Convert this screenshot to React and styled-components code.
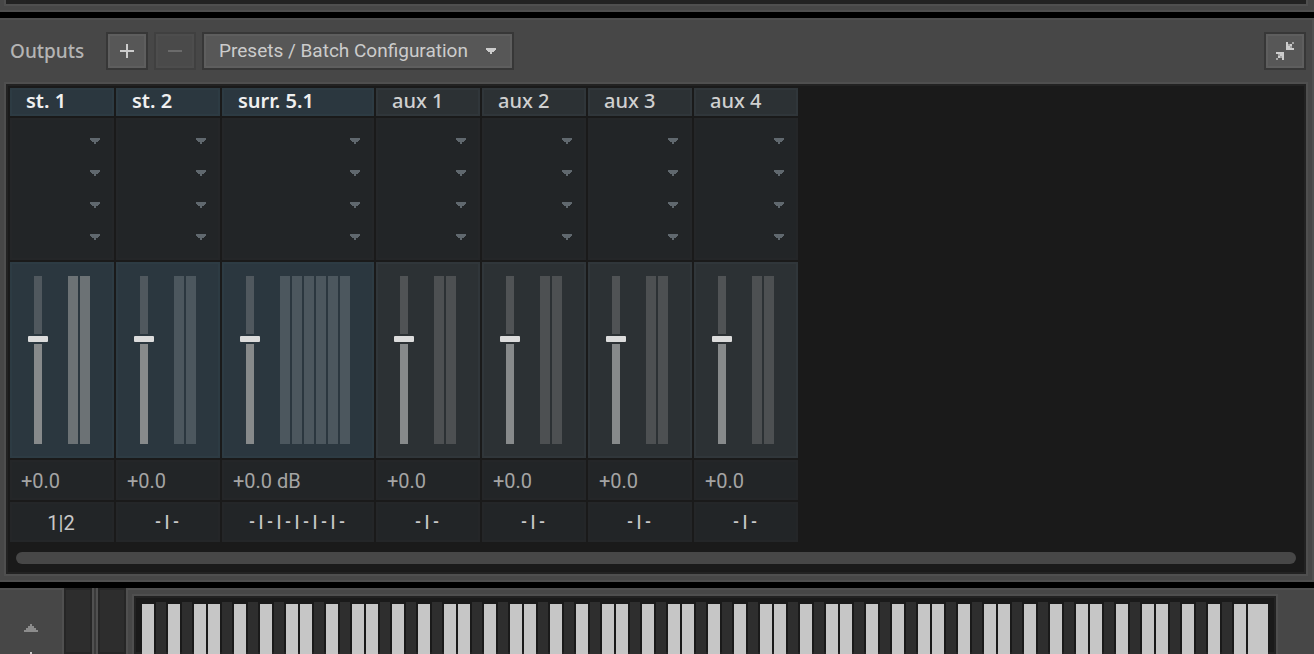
import React, { useState } from "react";
import styled, { createGlobalStyle, css } from "styled-components";

const GlobalStyle = createGlobalStyle`
  * { box-sizing: border-box; }
  html, body { margin: 0; background: #000; }
  button, input, select { font: inherit; color: inherit; margin: 0; border-radius: 0; }
`;

const labelFont = `"Noto Sans", "Open Sans", sans-serif`;
const pixelFont = `Roboto, "Liberation Sans", sans-serif`;
const dashFont = `"Liberation Mono", monospace`;

const Page = styled.div`
  height: 100vh;
  display: flex;
  flex-direction: column;
  gap: 6px;
  overflow: hidden;
  background: #000;
  color: #c8c8c8;
  font-family: ${pixelFont};
  font-size: 19px;
  line-height: 24px;
`;

const well = css`
  border: 2px solid #4f4f4f;
  background: #1a1a1a;
  box-shadow: inset 0 0 0 2px #222;
`;

const RackEdge = styled.header`
  flex: none;
  padding: 0 6px 4px 4px;
  background: #474747;
  border-bottom: 2px solid #505050;
`;

const RackWell = styled.div`
  ${well}
  border-top: 0;
  height: 6px;
`;

const OutputsPanel = styled.section`
  flex: none;
  padding: 12px 4px 4px;
  background: #474747;
  border: solid #505050;
  border-width: 2px 2px 2px 0;
`;

const Toolbar = styled.div`
  display: flex;
  align-items: center;
  gap: 6px;
  padding: 0 2px 12px 6px;
`;

const ToolbarTitle = styled.h1`
  margin: 0 15px 0 0;
  width: 75px;
  font: 500 19px/24px ${labelFont};
  color: #b4b4b4;
`;

const ToolButton = styled.button`
  display: flex;
  align-items: center;
  justify-content: center;
  gap: 18px;
  height: 38px;
  min-width: 42px;
  padding: ${(p) => (p.$wide ? "0 16px 0 15px" : "0")};
  border: 2px solid #373737;
  background: #575757;
  box-shadow: inset 0 0 0 2px #5e5e5e;
  color: #cccccc;
  &:disabled {
    border-color: #404040;
    background: #4a4a4a;
    box-shadow: inset 0 0 0 2px #4d4d4d;
    color: #6b6b6b;
  }
`;

const Spacer = styled.div`
  flex: 1;
`;

const Mixer = styled.div`
  ${well}
  padding: 4px 8px 10px 4px;
`;

const Channels = styled.div`
  display: flex;
  gap: 2px;
`;

const Channel = styled.article`
  flex: none;
  width: ${(p) => (p.$wide ? 152 : 104)}px;
  display: flex;
  flex-direction: column;
  gap: 2px;
`;

const ChannelName = styled.h2`
  margin: 0;
  height: 28px;
  padding: 0 16px;
  font: ${(p) => (p.$main ? 600 : 500)} 20px/26px ${labelFont};
  color: ${(p) => (p.$main ? "#f0f0f0" : "#d0d0d0")};
  background: ${(p) => (p.$main ? "#2b373f" : "#2c3134")};
  box-shadow: inset 0 0 0 2px ${(p) => (p.$main ? "#2d3b43" : "#30363a")};
`;

const darkCell = css`
  background: #222527;
  box-shadow: inset 0 0 0 2px #242628;
`;

const Slots = styled.div`
  ${darkCell}
  padding: 7px 0;
`;

const Slot = styled.label`
  display: grid;
  align-items: center;
  height: 32px;
  padding: 0 14px;
  > * { grid-area: 1 / 1; }
  > svg { justify-self: end; pointer-events: none; }
`;

const SlotSelect = styled.select`
  appearance: none;
  width: 100%;
  height: 24px;
  border: 0;
  background: transparent;
`;

const FaderArea = styled.div`
  display: flex;
  gap: 20px;
  padding: 14px 18px;
  background: ${(p) => (p.$main ? "#2b373f" : "#2c3134")};
  box-shadow: inset 0 0 0 2px ${(p) => (p.$main ? "#2d3b43" : "#30363a")};
`;

const Fader = styled.input`
  appearance: none;
  writing-mode: vertical-lr;
  direction: rtl;
  width: 20px;
  height: 168px;
  background:
    linear-gradient(${(p) => (p.$main ? "#50585e" : "#505355")} 0 58px, transparent 58px 68px, #878a8b 68px) center / 8px 100% no-repeat;
  &::-webkit-slider-thumb {
    appearance: none;
    width: 20px;
    height: 6px;
    border-radius: 1px;
    background: #dcdcdc;
  }
`;

const Meter = styled.div`
  display: flex;
  gap: 2px;
`;

const MeterBar = styled.div`
  width: 10px;
  height: 168px;
  background: ${(p) => (p.$active ? "#6c7275" : p.$main ? "#4c575e" : "#4d5052")};
`;

const Gain = styled.input`
  ${darkCell}
  width: 100%;
  height: 40px;
  padding: 2px 11px 0;
  border: 0;
  font-size: 20px;
  color: #a4a4a4;
`;

const Routing = styled.button`
  ${darkCell}
  width: 100%;
  height: 40px;
  padding: 2px 2px 0 0;
  border: 0;
  font: ${(p) => (p.$assigned ? `20px/24px ${pixelFont}` : `bold 15px/24px ${dashFont}`)};
`;

const ScrollTrack = styled.div`
  margin: 10px 2px 0 6px;
  height: 12px;
  border-radius: 6px;
  background: #474747;
`;

const KeyboardPanel = styled.section`
  flex: 1;
  min-height: 0;
  display: flex;
  background: #474747;
`;

const OctaveBox = styled.div`
  width: 64px;
  display: flex;
  flex-direction: column;
  align-items: center;
  gap: 20px;
  padding-top: 34px;
  border: solid #505050;
  border-width: 2px 2px 0 0;
  > * { flex: none; }
`;

const OctaveButton = styled.button`
  display: flex;
  padding: 0;
  border: 0;
  background: none;
`;

const Wheel = styled.div`
  width: 28px;
  background: #2d2d2d;
  box-shadow: inset 0 0 0 2px #262626;
`;

const WheelDivider = styled.div`
  width: 6px;
  background: #3a3a3a;
  border: solid #505050;
  border-width: 0 2px;
`;

const KeyBed = styled.div`
  flex: 1;
  min-width: 0;
  padding: 4px 36px 0 4px;
  border: solid #505050;
  border-width: 2px 0 0 2px;
`;

const Keys = styled.div`
  ${well}
  border-bottom: 0;
  height: 100%;
  display: flex;
  gap: 2px;
  padding: 6px 8px 0;
`;

const Key = styled.div`
  flex: ${(p) => p.$units} 1 0;
  margin-top: ${(p) => (p.$black ? 0 : 2)}px;
  background: ${(p) => (p.$black ? "#2e2e2e" : "#c6c6c6")};
`;

const DownArrow = ({ color }) => (
  <svg width="10" height="6" viewBox="0 0 10 6" fill={color} shapeRendering="crispEdges" aria-hidden="true">
    <path d="M0 0H10V2H9V3H8V4H6V6H4V4H2V3H1V2H0Z" />
  </svg>
);

const PlusIcon = () => (
  <svg width="14" height="14" viewBox="0 0 14 14" fill="currentColor" shapeRendering="crispEdges" aria-hidden="true">
    <path d="M6 0H8V6H14V8H8V14H6V8H0V6H6Z" />
  </svg>
);

const CollapseIcon = () => (
  <svg width="18" height="18" viewBox="0 0 18 18" fill="#cccccc" shapeRendering="crispEdges" aria-hidden="true">
    <path d="M10 0H12V4H14V6H18V8H10Z" />
    <path d="M14 2H16V4H14Z" />
    <path d="M12 2H14V4H12ZM16 0H18V2H16ZM14 4H16V6H14Z" opacity="0.65" />
    <path d="M0 10H8V18H6V14H4V12H0Z" />
    <path d="M2 14H4V16H2Z" />
    <path d="M4 14H6V16H4ZM0 16H2V18H0ZM2 12H4V14H2Z" opacity="0.65" />
  </svg>
);

const channels = [
  { name: "st. 1", main: true, bars: 2, gain: "+0.0", routing: "1|2", active: true },
  { name: "st. 2", main: true, bars: 2, gain: "+0.0", routing: "-|-" },
  { name: "surr. 5.1", main: true, bars: 6, gain: "+0.0 dB", routing: "-|-|-|-|-|-" },
  { name: "aux 1", bars: 2, gain: "+0.0", routing: "-|-" },
  { name: "aux 2", bars: 2, gain: "+0.0", routing: "-|-" },
  { name: "aux 3", bars: 2, gain: "+0.0", routing: "-|-" },
  { name: "aux 4", bars: 2, gain: "+0.0", routing: "-|-" },
];

const octave = "wbwbwwbwbwbw";
const keyPattern = octave.repeat(7).split("");

function ChannelStrip({ channel }) {
  const { name, main, bars, gain, routing, active } = channel;
  const [value, setValue] = useState(gain);
  return (
    <Channel $wide={bars > 2}>
      <ChannelName $main={main}>{name}</ChannelName>
      <Slots>
        {[1, 2, 3, 4].map((n) => (
          <Slot key={n}>
            <SlotSelect aria-label={`${name} effect slot ${n}`}>
              <option value="" />
            </SlotSelect>
            <DownArrow color="#60686e" />
          </Slot>
        ))}
      </Slots>
      <FaderArea $main={main}>
        <Fader type="range" min="0" max="162" defaultValue="102" $main={main} aria-label={`${name} volume`} />
        <Meter>
          {Array.from({ length: bars }, (_, i) => (
            <MeterBar key={i} $main={main} $active={active} />
          ))}
        </Meter>
      </FaderArea>
      <Gain value={value} onChange={(e) => setValue(e.target.value)} aria-label={`${name} gain`} />
      <Routing type="button" $assigned={active}>{routing}</Routing>
    </Channel>
  );
}

export default function App() {
  return (
    <>
      <GlobalStyle />
      <Page>
        <RackEdge>
          <RackWell />
        </RackEdge>
        <OutputsPanel>
          <Toolbar>
            <ToolbarTitle>Outputs</ToolbarTitle>
            <ToolButton type="button" aria-label="Add output">
              <PlusIcon />
            </ToolButton>
            <ToolButton type="button" aria-label="Remove output" disabled>
              <svg width="14" height="2" viewBox="0 0 14 2" fill="currentColor" aria-hidden="true">
                <path d="M0 0H14V2H0Z" />
              </svg>
            </ToolButton>
            <ToolButton type="button" $wide aria-haspopup="menu">
              Presets / Batch Configuration
              <DownArrow color="#cccccc" />
            </ToolButton>
            <Spacer />
            <ToolButton type="button" aria-label="Collapse outputs">
              <CollapseIcon />
            </ToolButton>
          </Toolbar>
          <Mixer>
            <Channels>
              {channels.map((channel) => (
                <ChannelStrip key={channel.name} channel={channel} />
              ))}
            </Channels>
            <ScrollTrack />
          </Mixer>
        </OutputsPanel>
        <KeyboardPanel>
          <OctaveBox>
            <OctaveButton type="button" aria-label="Octave up">
              <svg width="14" height="8" viewBox="0 0 14 8" fill="#8c8c8c" shapeRendering="crispEdges" aria-hidden="true">
                <path d="M6 0H8V2H10V4H12V6H14V8H0V6H2V4H4V2H6Z" />
              </svg>
            </OctaveButton>
            <PlusIcon />
          </OctaveBox>
          <Wheel />
          <WheelDivider />
          <Wheel />
          <KeyBed>
            <Keys>
              {keyPattern.map((kind, i) => (
                <Key key={i} $black={kind === "b"} $units={kind === "b" ? 10 : 12} />
              ))}
              <Key $units={20} />
            </Keys>
          </KeyBed>
        </KeyboardPanel>
      </Page>
    </>
  );
}
